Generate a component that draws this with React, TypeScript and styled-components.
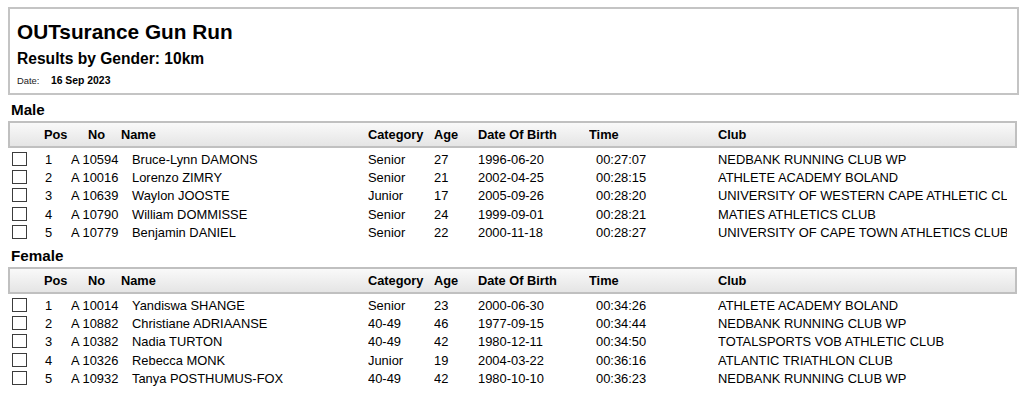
import React from "react";
import styled, { createGlobalStyle } from "styled-components";

const GlobalStyle = createGlobalStyle`
  html, body { margin: 0; padding: 0; background: #ffffff; }
  body { font-family: "Liberation Sans", Arial, sans-serif; color: #000; }
`;

const Page = styled.div`
  padding: 7px 0 0 8px;
  width: 1016px;
  box-sizing: border-box;
`;

const ReportHeader = styled.header`
  width: 1011px;
  height: 88px;
  box-sizing: border-box;
  border: 2px solid #c4c4c4;
  padding: 11px 0 0 7px;
  display: flex;
  flex-direction: column;
`;

const Title = styled.h1`
  margin: 0;
  font-size: 20.8px;
  line-height: 24px;
  font-weight: 700;
`;

const Subtitle = styled.h2`
  margin: 4.7px 0 0;
  font-size: 15.6px;
  line-height: 20px;
  font-weight: 700;
`;

const DateLine = styled.div`
  margin-top: 5px;
  line-height: 14px;
  display: flex;
  align-items: baseline;
`;

const DateLabel = styled.span`
  font-size: 9.4px;
  color: #222;
`;

const DateValue = styled.span`
  font-size: 10.4px;
  font-weight: 700;
  margin-left: 11.5px;
`;

const Section = styled.section<{ $gap: number }>`
  margin-top: ${(p) => p.$gap}px;
`;

const SectionTitle = styled.h3`
  margin: 0 0 2px 3px;
  font-size: 15.2px;
  line-height: 19px;
  font-weight: 700;
`;

const columns = "36px 27px 50px 247px 66px 44px 111px 129px 289px";

const HeaderRow = styled.div`
  width: 1009px;
  height: 27px;
  box-sizing: border-box;
  display: grid;
  grid-template-columns: ${columns};
  background: linear-gradient(#fbfbfb, #e3e3e3);
  box-shadow: inset 0 0 0 2px #c0c0c0;
  padding-top: 3px;
  margin-bottom: 2.5px;
  font-size: 12.8px;
  line-height: 21px;
  font-weight: 700;
`;

const DataRow = styled.div`
  display: grid;
  grid-template-columns: ${columns};
  height: 18.35px;
  font-size: 12.9px;
  line-height: 18.35px;
`;

const Cell = styled.div<{ $indent?: number }>`
  padding-left: ${(p) => p.$indent ?? 0}px;
  white-space: nowrap;
  overflow: hidden;
`;

const CheckCell = styled.div`
  padding-left: 4px;
`;

const CheckBox = styled.div`
  width: 15px;
  height: 14px;
  margin-top: 1px;
  box-sizing: border-box;
  border: 1px solid #3c3c3c;
  background: #fff;
`;

type Result = {
  pos: number;
  no: string;
  name: string;
  category: string;
  age: number;
  dob: string;
  time: string;
  club: string;
};

const male: Result[] = [
  { pos: 1, no: "A 10594", name: "Bruce-Lynn DAMONS", category: "Senior", age: 27, dob: "1996-06-20", time: "00:27:07", club: "NEDBANK RUNNING CLUB WP" },
  { pos: 2, no: "A 10016", name: "Lorenzo ZIMRY", category: "Senior", age: 21, dob: "2002-04-25", time: "00:28:15", club: "ATHLETE ACADEMY BOLAND" },
  { pos: 3, no: "A 10639", name: "Waylon JOOSTE", category: "Junior", age: 17, dob: "2005-09-26", time: "00:28:20", club: "UNIVERSITY OF WESTERN CAPE ATHLETIC CLUB" },
  { pos: 4, no: "A 10790", name: "William DOMMISSE", category: "Senior", age: 24, dob: "1999-09-01", time: "00:28:21", club: "MATIES ATHLETICS CLUB" },
  { pos: 5, no: "A 10779", name: "Benjamin DANIEL", category: "Senior", age: 22, dob: "2000-11-18", time: "00:28:27", club: "UNIVERSITY OF CAPE TOWN ATHLETICS CLUB" },
];

const female: Result[] = [
  { pos: 1, no: "A 10014", name: "Yandiswa SHANGE", category: "Senior", age: 23, dob: "2000-06-30", time: "00:34:26", club: "ATHLETE ACADEMY BOLAND" },
  { pos: 2, no: "A 10882", name: "Christiane ADRIAANSE", category: "40-49", age: 46, dob: "1977-09-15", time: "00:34:44", club: "NEDBANK RUNNING CLUB WP" },
  { pos: 3, no: "A 10382", name: "Nadia TURTON", category: "40-49", age: 42, dob: "1980-12-11", time: "00:34:50", club: "TOTALSPORTS VOB ATHLETIC CLUB" },
  { pos: 4, no: "A 10326", name: "Rebecca MONK", category: "Junior", age: 19, dob: "2004-03-22", time: "00:36:16", club: "ATLANTIC TRIATHLON CLUB" },
  { pos: 5, no: "A 10932", name: "Tanya POSTHUMUS-FOX", category: "40-49", age: 42, dob: "1980-10-10", time: "00:36:23", club: "NEDBANK RUNNING CLUB WP" },
];

function ResultsTable({ title, rows, gap }: { title: string; rows: Result[]; gap: number }) {
  return (
    <Section $gap={gap}>
      <SectionTitle>{title}</SectionTitle>
      <HeaderRow>
        <Cell />
        <Cell>Pos</Cell>
        <Cell $indent={17}>No</Cell>
        <Cell>Name</Cell>
        <Cell>Category</Cell>
        <Cell>Age</Cell>
        <Cell>Date Of Birth</Cell>
        <Cell>Time</Cell>
        <Cell>Club</Cell>
      </HeaderRow>
      {rows.map((r) => (
        <DataRow key={r.no}>
          <CheckCell>
            <CheckBox />
          </CheckCell>
          <Cell $indent={1}>{r.pos}</Cell>
          <Cell>{r.no}</Cell>
          <Cell $indent={11}>{r.name}</Cell>
          <Cell>{r.category}</Cell>
          <Cell>{r.age}</Cell>
          <Cell>{r.dob}</Cell>
          <Cell $indent={7}>{r.time}</Cell>
          <Cell>{r.club}</Cell>
        </DataRow>
      ))}
    </Section>
  );
}

export default function App() {
  return (
    <>
      <GlobalStyle />
      <Page>
        <ReportHeader>
          <Title>OUTsurance Gun Run</Title>
          <Subtitle>Results by Gender: 10km</Subtitle>
          <DateLine>
            <DateLabel>Date:</DateLabel>
            <DateValue>16 Sep 2023</DateValue>
          </DateLine>
        </ReportHeader>
        <ResultsTable title="Male" rows={male} gap={5} />
        <ResultsTable title="Female" rows={female} gap={4} />
      </Page>
    </>
  );
}
